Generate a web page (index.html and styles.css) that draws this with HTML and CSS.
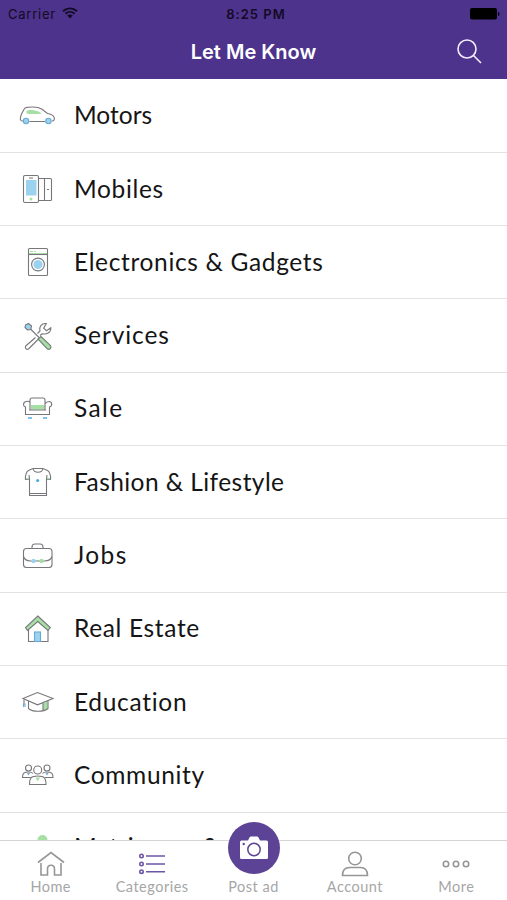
FILE: index.html
```html
<!DOCTYPE html>
<html lang="en">
<head>
    <meta charset="UTF-8">
    <meta name="viewport" content="width=device-width, initial-scale=1.0">
    <title>Let Me Know</title>
    <link rel="stylesheet" href="styles.css">
</head>
<body>
    <header class="header">
        <div class="status-bar">
            <div class="carrier">
                <span>Carrier</span>
                <svg class="wifi" width="16" height="12" viewBox="0 0 16 12">
                    <path d="M1 4.2C5 .4 11 .4 15 4.2M3.5 6.7c2.6-2.4 6.4-2.4 9 0" fill="none" stroke="#130a24" stroke-width="1.9"/>
                    <path d="M5.2 8.6c1.6-1.4 4-1.4 5.6 0L8 11.4z" fill="#130a24"/>
                </svg>
            </div>
            <span class="time">8:25 PM</span>
            <svg class="battery" width="30" height="12" viewBox="0 0 30 12">
                <rect x="0" y="0" width="27" height="11.5" rx="2"/>
                <path d="M28 4c2 .5 2 3.500 0 4z"/>
            </svg>
        </div>
        <div class="nav-bar">
            <h1>Let Me Know</h1>
            <svg class="search" width="26" height="26" viewBox="0 0 26 26">
                <circle cx="11" cy="10" r="9"/>
                <path d="M17.500 16.500l7.500 7.500"/>
            </svg>
        </div>
    </header>

    <ul class="categories">
        <li>
            <svg class="icon" viewBox="0 0 40 40">
                <path d="M6 25c-2 0-3-.8-2.600-3.500L4.500 18l3-5.500C8.300 11.400 9 11.500 11 11.300c6-.8 11-.1 14 2l5.500 4.200c3 .5 5.500 1.500 6.500 3.500.8 2 .2 4-2 4M12.500 25.500h15.500"/>
                <path class="green" d="M9.500 15c3-1.500 9-1.500 15.500 2.500-4 .8-12 .8-15.500 0z"/>
                <circle class="blue blue-line" cx="9" cy="25" r="2.700"/>
                <circle class="blue blue-line" cx="31.400" cy="25" r="2.700"/>
            </svg>
            <span class="motors">Motors</span>
        </li>
        <li>
            <svg class="icon" viewBox="0 0 40 40">
                <rect x="6.500" y="6.500" width="15" height="27" rx="1.500"/>
                <rect class="blue" x="9" y="11" width="10.500" height="15.500"/>
                <path d="M12 9h4M22 9.500h11.500q1 0 1 1v20q0 1-1 1H22M27.500 9.500v22M30 20.500h2"/>
                <circle class="green" cx="14" cy="30" r="1.500"/>
            </svg>
            <span class="mobiles">Mobiles</span>
        </li>
        <li>
            <svg class="icon" viewBox="0 0 40 40">
                <rect x="11.500" y="6.500" width="19" height="27" rx="1"/>
                <path class="green-line" d="M13 9.500h3M17 9.500h2M12 11.500h18"/>
                <path d="M11.500 12.500h19"/>
                <circle cx="21" cy="22.500" r="6.400"/>
                <circle class="blue" cx="21" cy="22.500" r="4.600"/>
            </svg>
            <span class="electronics">Electronics &amp; Gadgets</span>
        </li>
        <li>
            <svg class="icon" viewBox="0 0 40 40">
                <path d="M18.500 21.500L8.700 30c-1.200 1.500.7 4.300 2.800 3L21 23.500M23 19.500l2.300-1.800c4 1 8.800-1 8.500-6l-4.300 3-2.800-2.500 2.600-4.600c-4.600-.6-7.500 3-6.300 7.400l-2.500 2.500"/>
                <path d="M13 12.500l9 9"/>
                <path class="blue outline" d="M8.500 9l3-1.500 3 2.500-.8 3.500-3.200.5-2.500-2.500z"/>
                <path class="green outline" d="M21 23l3-2.500 9.500 9c1.500 2-1 5-3.200 3.300z"/>
            </svg>
            <span class="services">Services</span>
        </li>
        <li>
            <svg class="icon" viewBox="0 0 40 40">
                <rect class="green" x="14" y="16" width="13.500" height="4.500"/>
                <path d="M13 20.500V11q0-2 2-2h11q2 0 2 2v9.500M13 13.500c-2-2.300-6.500-1-6.500 2q0 2 2 2.500v7.500h24V18c3.500-1 2.500-5.500-.5-5.500-2 0-3 .8-4 2.500M12 21h17"/>
                <path class="feet" d="M11 29h4M26 29h4"/>
            </svg>
            <span class="sale">Sale</span>
        </li>
        <li>
            <svg class="icon" viewBox="0 0 40 40">
                <path d="M12.500 33.500V17l-4 .5c-.5-4 1-8 3-9l4.500-2h10l4.500 2c2 1 3.500 5 3 9l-4-.5v16.500zM16 6.500c1 5 9 5 10 0M16 6.500h10M12.500 31.500H29M12.500 17l-.5-4M29.500 17l.5-4"/>
                <path class="green-line" d="M9 16.500l3-.5M30 16l3 .5"/>
                <circle class="dot-blue" cx="20.700" cy="18.500" r="1.500"/>
            </svg>
            <span class="fashion">Fashion &amp; Lifestyle</span>
        </li>
        <li>
            <svg class="icon" viewBox="0 0 40 40">
                <rect x="6.500" y="12.500" width="28.500" height="19" rx="3"/>
                <path d="M15 12.500V11q0-3 3-3h5q3 0 3 3v1.500M6.500 20.500c1 3 3 4.500 7 4.500h14c4 0 6.500-1.500 7.500-4.500"/>
                <circle class="blue" cx="16.500" cy="25" r="2.200"/>
                <circle class="green" cx="24.500" cy="25" r="2.200"/>
            </svg>
            <span class="jobs">Jobs</span>
        </li>
        <li>
            <svg class="icon" viewBox="0 0 40 40">
                <path d="M11.500 19v13.500h19.500V19"/>
                <path class="green outline" d="M20.800 7L33.300 18.500 31 21.500 20.800 12.500 10.500 21.500 8.500 18.500z"/>
                <rect class="blue blue-line" x="17.500" y="23" width="6" height="9.500"/>
            </svg>
            <span class="real-estate">Real Estate</span>
        </li>
        <li>
            <svg class="icon" viewBox="0 0 40 40">
                <path class="green" d="M26 21.500l4.500-2V27.500L26 29z"/>
                <path d="M6 16.500l14.500-6L36 16.500l-15.500 6.300zM11.500 19.500V26.500c4 3.700 15 3.700 19.500 0v-7.500M26 21v8"/>
                <path d="M7 17.500v5"/>
                <path class="blue-line" d="M6.500 21.500v3.500M8 21.500v3.500"/>
            </svg>
            <span class="education">Education</span>
        </li>
        <li>
            <svg class="icon" viewBox="0 0 40 40">
                <circle cx="11.500" cy="13" r="3"/>
                <circle cx="30" cy="13" r="3"/>
                <circle cx="20.700" cy="15" r="4"/>
                <path d="M13.500 22.500H5.500c0-4.500 1.500-5.500 6-5.500 2 0 3.500.2 4.500 1.500M28 22.500h8c0-4.500-1.500-5.500-6-5.500-2 0-3.500.2-4.500 1.500M12.500 29.500c0-6.500 1.500-8.500 8.200-8.500s8.300 2 8.300 8.500z"/>
                <path class="blue-line" d="M10.500 18l1 1.500 1-1.500M29 18l1 1.500 1-1.500"/>
                <path class="green" d="M18.500 22.500h4.500l-2.300 4z"/>
            </svg>
            <span class="community">Community</span>
        </li>
        <li>
            <svg class="icon" viewBox="0 0 40 40">
                <circle class="green" cx="25.500" cy="11" r="5"/>
            </svg>
            <span class="matrimony">Matrimony &amp;</span>
        </li>
    </ul>

    <nav class="tab-bar">
        <a class="tab">
            <svg viewBox="0 0 28 28">
                <path d="M1 12.500L14 2.500l13 10M4 13v12h6.500V19c0-5 7-5 7 0v6H24V13"/>
            </svg>
            <span>Home</span>
        </a>
        <a class="tab active">
            <svg viewBox="0 0 28 28">
                <circle cx="3.500" cy="6" r="1.700"/>
                <circle cx="3.500" cy="14" r="1.700"/>
                <circle cx="3.500" cy="21.700" r="1.700"/>
                <path d="M8 6h19M8 14h19M8 21.700h19"/>
            </svg>
            <span>Categories</span>
        </a>
        <a class="tab">
            <div class="post-button">
                <svg class="camera" viewBox="0 0 30 24">
                    <path d="M2.500 4.500H9l1.500-3Q11 .5 12 .5h6q1 0 1.500 1l1.500 3h6.500q1.500 0 1.500 1.500v15.500q0 1.500-1.500 1.500h-25Q1 23 1 21.500V6q0-1.500 1.500-1.500z" fill="#fff"/>
                    <circle cx="15" cy="13.500" r="6.200" fill="none" stroke="#5c4396" stroke-width="1.500"/>
                    <circle cx="4.700" cy="8" r="1.200" fill="#5c4396"/>
                </svg>
            </div>
            <span>Post ad</span>
        </a>
        <a class="tab">
            <svg viewBox="0 0 28 28">
                <circle cx="14" cy="8.500" r="6.300"/>
                <path d="M1.500 25.500c0-5.500 3-8 7-8h11c4 0 7 2.500 7 8z"/>
            </svg>
            <span>Account</span>
        </a>
        <a class="tab">
            <svg viewBox="0 0 28 28">
                <circle cx="4" cy="14" r="2.700"/>
                <circle cx="14" cy="14" r="2.700"/>
                <circle cx="24" cy="14" r="2.700"/>
            </svg>
            <span>More</span>
        </a>
    </nav>
</body>
</html>
```
FILE: styles.css
```css
* {
    box-sizing: border-box;
}

body {
    margin: 0;
    height: 900px;
    display: flex;
    flex-direction: column;
    overflow: hidden;
    background-color: #fff;
    font-family: Lato, sans-serif;
    font-variant-ligatures: none;
}

.header {
    height: 79px;
    flex-shrink: 0;
    background-color: #4d338c;
    font-family: Inter, sans-serif;
}

.status-bar {
    height: 27px;
    display: grid;
    grid-template-columns: 1fr auto 1fr;
    align-items: center;
    padding: 0 7px 0 8px;
    font-size: 13px;
    color: #130a24;
}

.carrier {
    display: flex;
    align-items: center;
    gap: 6px;
    letter-spacing: 0.75px;
}

.wifi {
    margin-bottom: 2px;
}

.time {
    padding-left: 4px;
    font-weight: 600;
    letter-spacing: 1px;
}

.battery {
    justify-self: end;
}

.nav-bar {
    height: 50px;
    display: grid;
    grid-template-columns: 1fr auto 1fr;
    align-items: center;
    padding: 0 25px;
}

h1 {
    grid-column: 2;
    margin: 0;
    color: #fff;
    font-size: 20px;
    font-weight: 600;
}

.search {
    justify-self: end;
    fill: none;
    stroke: #f3eefc;
    stroke-width: 1.6;
}

.categories {
    flex: 1;
    min-height: 0;
    overflow: hidden;
    margin: 0;
    padding: 0.6px 0 0;
    list-style: none;
}

.categories li {
    height: 73.3px;
    display: flex;
    align-items: center;
    gap: 17px;
    padding-left: 17px;
    border-bottom: 1px solid #e2e2e2;
    font-size: 24.5px;
    color: #151515;
    white-space: nowrap;
}

.categories span {
    padding-bottom: 2px;
    letter-spacing: 0.65px;
}

.categories .motors {
    letter-spacing: 0;
}

.categories .services {
    letter-spacing: 0.9px;
}

.categories .sale,
.categories .jobs {
    letter-spacing: 1.4px;
}

.categories .fashion {
    letter-spacing: 0.43px;
}

.categories .education {
    letter-spacing: 0.7px;
}

.categories .matrimony {
    padding-bottom: 5px;
    letter-spacing: 0.4px;
}

.icon {
    width: 40px;
    height: 40px;
    flex-shrink: 0;
    fill: none;
    stroke: #77777b;
    stroke-width: 1.1;
}

.blue {
    fill: #9bd2f0;
    stroke: none;
}

.green {
    fill: #a6dfa3;
    stroke: none;
}

.outline {
    stroke: #77777b;
}

.blue-line {
    stroke: #6aa9d2;
}

.green-line {
    stroke: #a6dfa3;
}

.feet {
    stroke: #7cc4ee;
    stroke-width: 1.8;
}

.dot-blue {
    fill: #49a5e0;
    stroke: none;
}

.tab-bar {
    height: 60px;
    flex-shrink: 0;
    display: flex;
    border-top: 1px solid #d4d4d4;
    background-color: #fff;
}

.tab {
    flex: 1;
    display: flex;
    flex-direction: column;
    align-items: center;
    justify-content: flex-end;
    padding-bottom: 4px;
    font-size: 14.5px;
    line-height: 18px;
    letter-spacing: 0.5px;
    color: #a6a6a6;
}

.tab svg {
    width: 28px;
    height: 28px;
    fill: none;
    stroke: #969696;
    stroke-width: 1.6;
}

.active svg {
    stroke: #6c55a5;
}

.post-button {
    width: 52px;
    height: 52px;
    flex-shrink: 0;
    display: flex;
    align-items: center;
    justify-content: center;
    margin-bottom: 4px;
    border-radius: 50%;
    background-color: #5c4396;
}

.tab .camera {
    width: 30px;
    height: 24px;
    stroke: none;
}
```
